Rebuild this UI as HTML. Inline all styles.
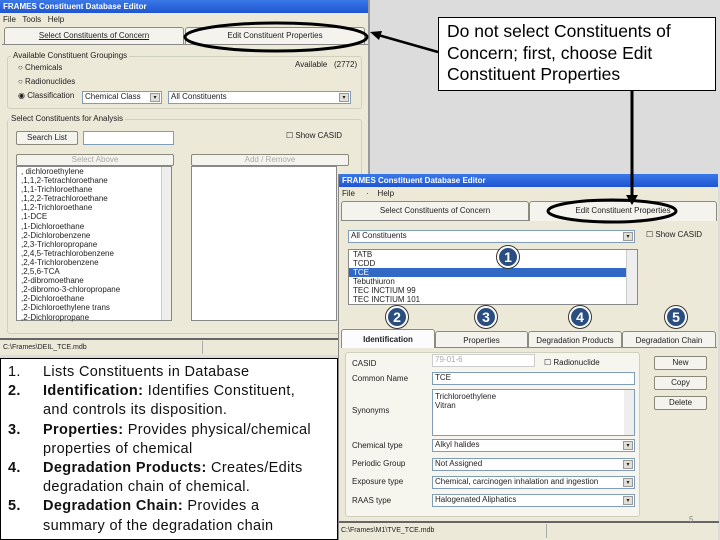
<!DOCTYPE html>
<html><head><meta charset="utf-8"><style>
*{box-sizing:border-box;margin:0;padding:0}
body{width:720px;height:540px;overflow:hidden;background:#dcdcdc;position:relative;font-family:"Liberation Sans",sans-serif;font-size:8px;color:#222}
.a{position:absolute}
.win{background:#ece9d8}
.title{background:linear-gradient(#3a78e8,#1f55d0);color:#fff;font-weight:bold;font-size:8px;padding-left:3px;line-height:13px}
.box{background:#fff;border:1px solid #7f9db9}
.grp{border:1px solid #d0d0bf;border-radius:3px}
.btn{background:#f4f3ee;border:1px solid #8a8a7a;border-radius:2px;text-align:center;color:#222}
.dd{position:absolute;right:1px;top:1px;width:10px;bottom:1px;background:#e0e0d8;border:1px solid #999;font-size:6px;text-align:center}
.tab{border:1px solid #8c8c7c;border-bottom:none;border-radius:3px 3px 0 0;background:#f4f3ee;text-align:center}
.c{width:22px;height:22px;border-radius:50%;background:#2b4e80;border:2px solid #fff;box-shadow:0 0 0 1px #333;color:#fff;font-weight:bold;font-size:14px;text-align:center;line-height:18px}
.list div{line-height:9.1px;padding-left:4px;white-space:nowrap}
.tx div{white-space:nowrap}
</style></head><body>

<!-- window 1 -->
<div class="a win" style="left:0;top:0;width:370px;height:355px;border-right:2px solid #999">
 <div class="title">FRAMES Constituent Database Editor</div>
 <div class="a" style="left:3px;top:15px">File&nbsp;&nbsp; Tools&nbsp;&nbsp; Help</div>
 <div class="a tab" style="left:4px;top:27px;width:180px;height:18px;line-height:16px;text-decoration:underline">Select Constituents of Concern</div>
 <div class="a tab" style="left:185px;top:27px;width:180px;height:18px;line-height:16px">Edit Constituent Properties</div>
 <div class="a" style="left:2px;top:44px;width:366px;border-top:1px solid #888"></div>
 <div class="a grp" style="left:7px;top:56px;width:355px;height:53px"></div>
 <div class="a" style="left:11px;top:51px;background:#ece9d8;padding:0 2px">Available Constituent Groupings</div>
 <div class="a" style="left:18px;top:63px">○ Chemicals</div>
 <div class="a" style="left:18px;top:77px">○ Radionuclides</div>
 <div class="a" style="left:18px;top:91px">◉ Classification</div>
 <div class="a" style="left:295px;top:60px">Available&nbsp;&nbsp; (2772)</div>
 <div class="a box" style="left:82px;top:91px;width:80px;height:13px;padding-left:2px">Chemical Class<div class="dd">▾</div></div>
 <div class="a box" style="left:168px;top:91px;width:183px;height:13px;padding-left:2px">All Constituents<div class="dd">▾</div></div>
 <div class="a grp" style="left:7px;top:119px;width:355px;height:215px"></div>
 <div class="a" style="left:9px;top:114px;background:#ece9d8;padding:0 2px">Select Constituents for Analysis</div>
 <div class="a btn" style="left:16px;top:131px;width:62px;height:14px;line-height:12px">Search List</div>
 <div class="a box" style="left:83px;top:131px;width:91px;height:14px"></div>
 <div class="a" style="left:286px;top:131px">☐ Show CASID</div>
 <div class="a btn" style="left:16px;top:154px;width:158px;height:12px;line-height:10px;color:#aaa">Select Above</div>
 <div class="a btn" style="left:191px;top:154px;width:158px;height:12px;line-height:10px;color:#aaa">Add / Remove</div>
 <div class="a box list" style="left:16px;top:166px;width:156px;height:155px;border-color:#888">
  <div>, dichloroethylene</div><div>,1,1,2-Tetrachloroethane</div><div>,1,1-Trichloroethane</div><div>,1,2,2-Tetrachloroethane</div><div>,1,2-Trichloroethane</div><div>,1-DCE</div><div>,1-Dichloroethane</div><div>,2-Dichlorobenzene</div><div>,2,3-Trichloropropane</div><div>,2,4,5-Tetrachlorobenzene</div><div>,2,4-Trichlorobenzene</div><div>,2,5,6-TCA</div><div>,2-dibromoethane</div><div>,2-dibromo-3-chloropropane</div><div>,2-Dichloroethane</div><div>,2-Dichloroethylene trans</div><div>,2-Dichloropropane</div>
  <div class="a" style="right:0;top:0;width:10px;height:153px;background:#eee;border-left:1px solid #ccc"></div>
 </div>
 <div class="a box" style="left:191px;top:166px;width:146px;height:155px;border-color:#888"></div>
 <div class="a" style="left:0;top:338px;width:338px;border-top:2px solid #666"></div>
 <div class="a" style="left:3px;top:344px;font-size:7px">C:\Frames\DEIL_TCE.mdb</div>
 <div class="a" style="left:202px;top:341px;height:13px;border-left:1px solid #aaa"></div>
</div>

<!-- callout -->
<div class="a" style="left:438px;top:17px;width:278px;height:74px;background:#fff;border:1px solid #000;font-size:17.5px;line-height:21.5px;padding:3px 0 0 8px;color:#000;white-space:nowrap">Do not select Constituents of<br>Concern; first, choose Edit<br>Constituent Properties</div>

<!-- text box -->
<div class="a tx" style="left:0;top:358px;width:338px;height:182px;background:#fff;border:1.5px solid #000;font-size:14.5px;line-height:19.2px;color:#111;padding-top:4px;letter-spacing:0.35px">
 <div style="position:relative;padding-left:42px">
  <div><span class="a" style="left:7px">1.</span>Lists Constituents in Database</div>
  <div><b class="a" style="left:7px">2.</b><b>Identification:</b> Identifies Constituent,</div>
  <div>and controls its disposition.</div>
  <div><b class="a" style="left:7px">3.</b><b>Properties:</b> Provides physical/chemical</div>
  <div>properties of chemical</div>
  <div><b class="a" style="left:7px">4.</b><b>Degradation Products:</b> Creates/Edits</div>
  <div>degradation chain of chemical.</div>
  <div><b class="a" style="left:7px">5.</b><b>Degradation Chain:</b> Provides a</div>
  <div>summary of the degradation chain</div>
 </div>
</div>

<!-- window 2 -->
<div class="a win" style="left:338px;top:174px;width:380px;height:366px;border-left:1px solid #888">
 <div class="title">FRAMES Constituent Database Editor</div>
 <div class="a" style="left:3px;top:15px">File&nbsp;&nbsp;&nbsp;&nbsp; ·&nbsp;&nbsp;&nbsp; Help</div>
 <div class="a tab" style="left:2px;top:27px;width:188px;height:20px;line-height:18px">Select Constituents of Concern</div>
 <div class="a tab" style="left:190px;top:27px;width:188px;height:20px;line-height:18px">Edit Constituent Properties</div>
 <div class="a" style="left:2px;top:46px;width:188px;border-top:1px solid #888"></div>
 <div class="a box" style="left:9px;top:56px;width:287px;height:13px;padding-left:2px">All Constituents<div class="dd">▾</div></div>
 <div class="a" style="left:307px;top:56px">☐ Show CASID</div>
 <div class="a box list" style="left:9px;top:75px;width:290px;height:56px;border-color:#888">
  <div>TATB</div><div>TCDD</div><div style="background:#316ac5;color:#fff;margin-right:11px">TCE</div><div>Tebuthiuron</div><div>TEC INCTIUM 99</div><div>TEC INCTIUM 101</div>
  <div class="a" style="right:0;top:0;width:11px;height:54px;background:#eee;border-left:1px solid #ccc"></div>
 </div>
 <div class="a tab" style="left:2px;top:155px;width:94px;height:19px;line-height:19px;font-weight:bold;background:#fcfcfe">Identification</div>
 <div class="a tab" style="left:96px;top:157px;width:93px;height:17px;line-height:17px">Properties</div>
 <div class="a tab" style="left:189px;top:157px;width:94px;height:17px;line-height:17px">Degradation Products</div>
 <div class="a tab" style="left:283px;top:157px;width:94px;height:17px;line-height:17px">Degradation Chain</div>
 <div class="a" style="left:96px;top:173px;width:282px;border-top:1px solid #888"></div>
 <div class="a grp" style="left:6px;top:178px;width:295px;height:165px;background:#f6f5ee"></div>
 <div class="a" style="left:13px;top:185px">CASID</div>
 <div class="a box" style="left:93px;top:180px;width:103px;height:13px;color:#aaa;padding-left:2px;border-color:#ccc">79-01-6</div>
 <div class="a" style="left:205px;top:184px">☐ Radionuclide</div>
 <div class="a" style="left:13px;top:200px">Common Name</div>
 <div class="a box" style="left:93px;top:198px;width:203px;height:13px;padding-left:2px">TCE</div>
 <div class="a" style="left:13px;top:232px">Synonyms</div>
 <div class="a box" style="left:93px;top:215px;width:203px;height:47px;padding:2px">Trichloroethylene<br>Vitran<div class="a" style="right:0;top:0;width:10px;height:45px;background:#eee"></div></div>
 <div class="a" style="left:13px;top:267px">Chemical type</div>
 <div class="a box" style="left:93px;top:265px;width:203px;height:13px;padding-left:2px">Alkyl halides<div class="dd">▾</div></div>
 <div class="a" style="left:13px;top:285px">Periodic Group</div>
 <div class="a box" style="left:93px;top:284px;width:203px;height:13px;padding-left:2px">Not Assigned<div class="dd">▾</div></div>
 <div class="a" style="left:13px;top:303px">Exposure type</div>
 <div class="a box" style="left:93px;top:302px;width:203px;height:13px;padding-left:2px">Chemical, carcinogen inhalation and ingestion<div class="dd">▾</div></div>
 <div class="a" style="left:13px;top:322px">RAAS type</div>
 <div class="a box" style="left:93px;top:320px;width:203px;height:13px;padding-left:2px">Halogenated Aliphatics<div class="dd">▾</div></div>
 <div class="a btn" style="left:315px;top:182px;width:53px;height:14px;line-height:12px">New</div>
 <div class="a btn" style="left:315px;top:202px;width:53px;height:14px;line-height:12px">Copy</div>
 <div class="a btn" style="left:315px;top:222px;width:53px;height:14px;line-height:12px">Delete</div>
 <div class="a" style="left:0;top:347px;width:380px;border-top:2px solid #666"></div>
 <div class="a" style="left:2px;top:353px;font-size:7px">C:\Frames\M1\TVE_TCE.mdb</div>
 <div class="a" style="left:207px;top:350px;height:14px;border-left:1px solid #aaa"></div>
 <div class="a" style="left:350px;top:341px;color:#888">5</div>
</div>

<!-- circles -->
<div class="a c" style="left:497px;top:246px">1</div>
<div class="a c" style="left:386px;top:306px">2</div>
<div class="a c" style="left:475px;top:306px">3</div>
<div class="a c" style="left:569px;top:306px">4</div>
<div class="a c" style="left:665px;top:306px">5</div>

<!-- ellipses & arrows -->
<svg class="a" style="left:0;top:0" width="720" height="540">
 <ellipse cx="276" cy="37" rx="91" ry="14" fill="none" stroke="#000" stroke-width="3"/>
 <ellipse cx="612" cy="211" rx="64" ry="11" fill="none" stroke="#000" stroke-width="3"/>
 <line x1="438" y1="52" x2="378" y2="35" stroke="#000" stroke-width="2.5"/>
 <polygon points="370,32 382,31 379,40" fill="#000"/>
 <line x1="632" y1="91" x2="632" y2="196" stroke="#000" stroke-width="3"/>
 <polygon points="626,195 638,195 632,205" fill="#000"/>
</svg>
</body></html>
